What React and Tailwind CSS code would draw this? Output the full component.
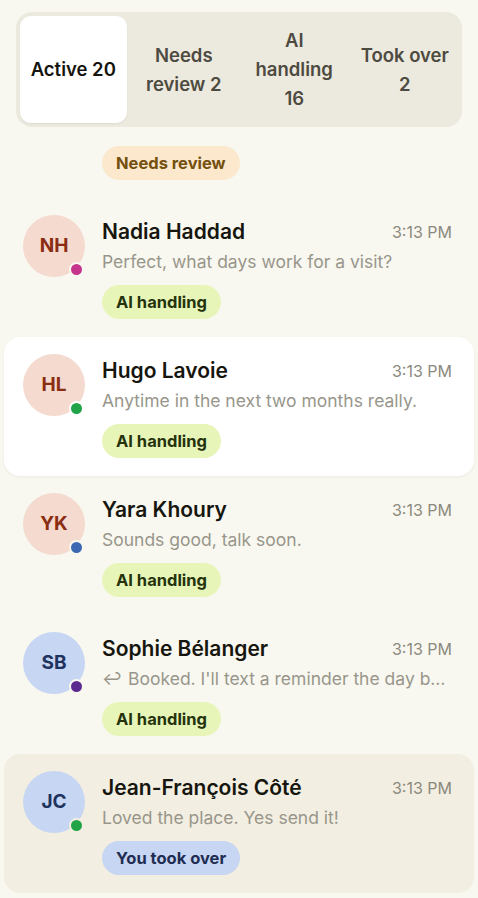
import React from "react";

const rows = [
  { initials: "NH", name: "Nadia Haddad", msg: "Perfect, what days work for a visit?", av: "bg-[#f4dacf] text-[#8a2d12]", dot: "bg-[#c4358b]", badge: "ai", variant: "plain" },
  { initials: "HL", name: "Hugo Lavoie", msg: "Anytime in the next two months really.", av: "bg-[#f4dacf] text-[#8a2d12]", dot: "bg-[#21a348]", badge: "ai", variant: "white" },
  { initials: "YK", name: "Yara Khoury", msg: "Sounds good, talk soon.", av: "bg-[#f4dacf] text-[#8a2d12]", dot: "bg-[#3b67b3]", badge: "ai", variant: "plain" },
  { initials: "SB", name: "Sophie Bélanger", msg: "Booked. I'll text a reminder the day b…", reply: true, av: "bg-[#c6d6f3] text-[#1f335f]", dot: "bg-[#5b2a8e]", badge: "ai", variant: "plain" },
  { initials: "JC", name: "Jean-François Côté", msg: "Loved the place. Yes send it!", av: "bg-[#c6d6f3] text-[#1f335f]", dot: "bg-[#21a348]", badge: "took", variant: "beige" },
];

function Badge({ kind }) {
  if (kind === "ai")
    return <span className="inline-flex h-[34px] items-center rounded-full bg-[#e7f5b9] px-[14px] text-[16.5px] font-bold text-[#25330c]">AI handling</span>;
  if (kind === "took")
    return <span className="inline-flex h-[34px] items-center rounded-full bg-[#c6d6f3] px-[14px] text-[16.5px] font-bold text-[#1f2d52]">You took over</span>;
  return <span className="inline-flex h-[34px] items-center rounded-full bg-[#fbe8cd] px-[14px] text-[16.5px] font-bold text-[#74500f]">Needs review</span>;
}

function Row({ r }) {
  const bg =
    r.variant === "white"
      ? "bg-white rounded-[16px] shadow-[0_1px_3px_rgba(0,0,0,0.06)]"
      : r.variant === "beige"
      ? "bg-[#f2eee1] rounded-[16px]"
      : "";
  return (
    <div className={`mx-[4px] flex h-[139px] gap-[17px] pl-[19px] pr-[22px] pt-[17px] ${bg}`}>
      <div className="relative h-[62px] w-[62px] shrink-0">
        <div className={`flex h-[62px] w-[62px] items-center justify-center rounded-full text-[19px] font-bold ${r.av}`}>{r.initials}</div>
        <div className={`absolute left-[46px] top-[47px] h-[15px] w-[15px] rounded-full border-[2.5px] ${r.variant === "white" ? "border-white" : r.variant === "beige" ? "border-[#f2eee1]" : "border-[#f9f8f0]"} ${r.dot}`} />
      </div>
      <div className="min-w-0 flex-1 pt-[2px]">
        <div className="flex items-center justify-between leading-[30px]">
          <span className="text-[21px] font-semibold text-[#16160f]">{r.name}</span>
          <span className="text-[16px] text-[#8c8a7e]">3:13 PM</span>
        </div>
        <div className="mt-[1px] whitespace-nowrap text-[17.5px] leading-[28px] text-[#98968b]">
          {r.reply ? <span className="mr-[6px]">↩</span> : null}
          {r.msg}
        </div>
        <div className="mt-[9px]">
          <Badge kind={r.badge} />
        </div>
      </div>
    </div>
  );
}

export default function App() {
  const tabs = [
    { label: "Active 20", active: true },
    { label: "Needs review 2" },
    { label: "AI handling 16" },
    { label: "Took over 2" },
  ];
  return (
    <div className="min-h-[898px] w-[478px] overflow-hidden bg-[#f9f8f0]" style={{ fontFamily: "Inter, 'Noto Sans', sans-serif" }}>
      <div className="px-[16px] pt-[12px]">
        <div className="grid grid-cols-4 gap-[4px] rounded-[16px] bg-[#ece9de] p-[4px]">
          {tabs.map((t) =>
            t.active ? (
              <div key={t.label} className="flex h-[107px] items-center justify-center rounded-[11px] bg-white text-center text-[18.5px] font-semibold text-[#14140e] shadow-[0_1px_2px_rgba(0,0,0,0.06)]">
                {t.label}
              </div>
            ) : (
              <div key={t.label} className="flex h-[107px] items-center justify-center px-[4px] text-center text-[18.5px] font-semibold leading-[29px] text-[#4d4b41]">
                {t.label}
              </div>
            )
          )}
        </div>
      </div>
      <div className="pl-[102px] pt-[19px] pb-[18px]">
        <Badge kind="review" />
      </div>
      {rows.map((r) => (
        <Row key={r.initials} r={r} />
      ))}
    </div>
  );
}
